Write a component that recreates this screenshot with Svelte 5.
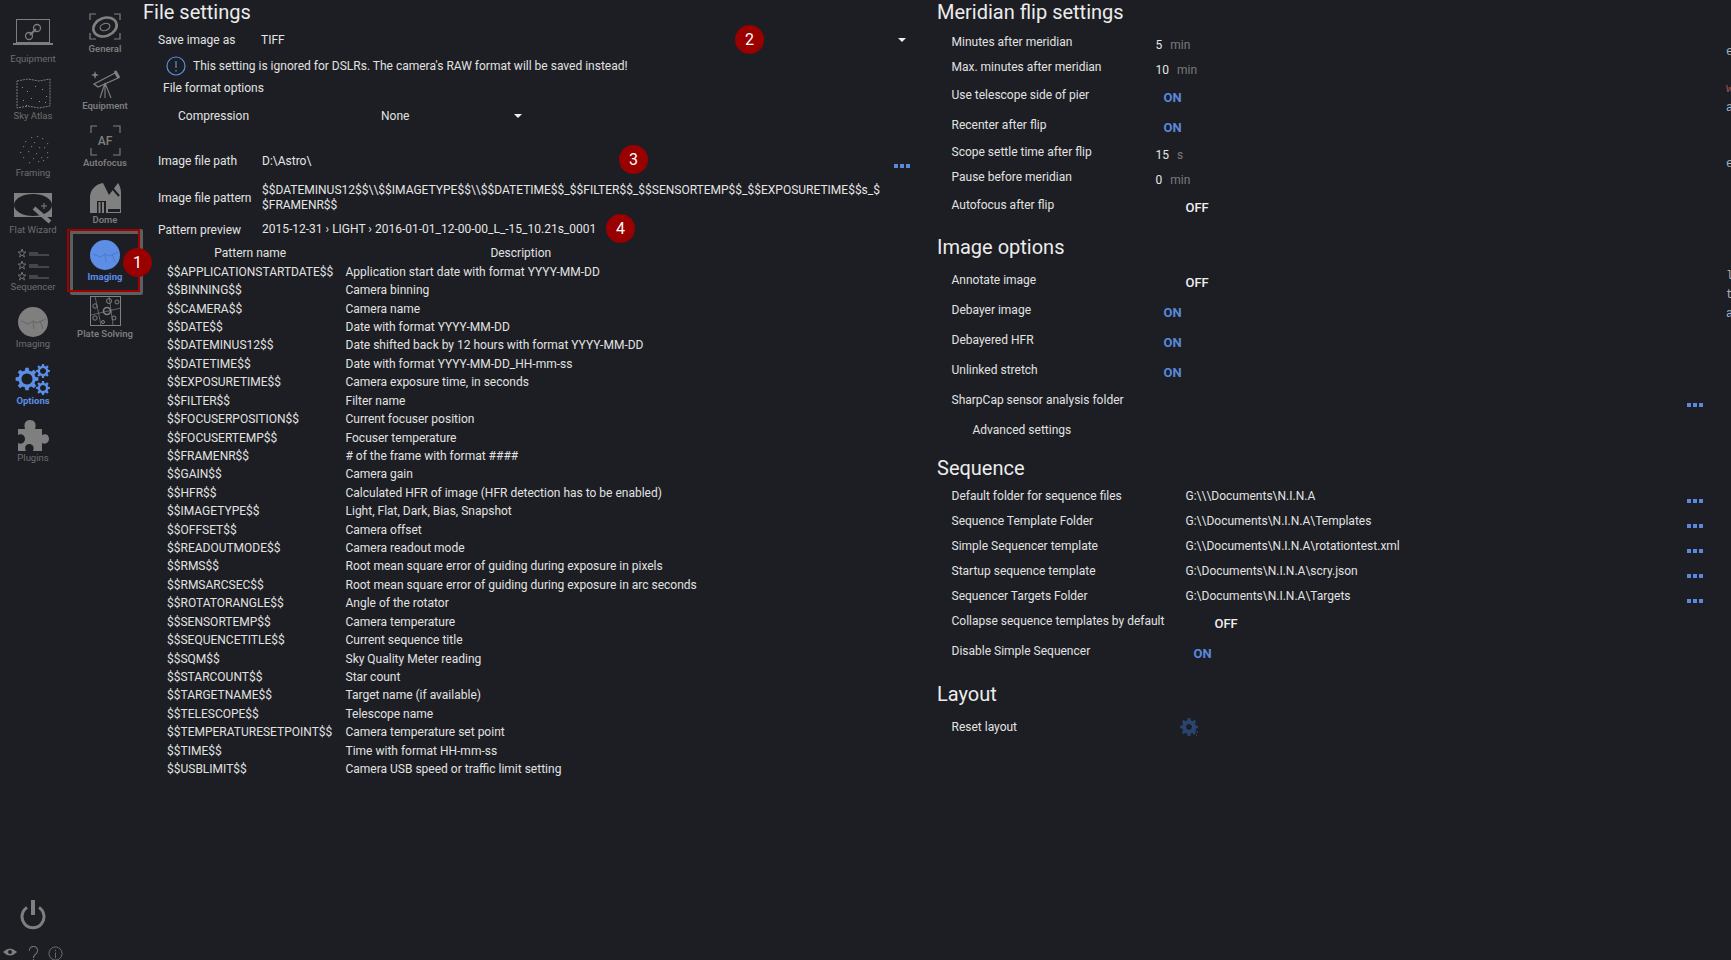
<script>
  const gear = (cx, cy, r, n) => {
    const pts = [];
    const step = (Math.PI * 2) / n;
    for (let i = 0; i < n; i++) {
      const a = i * step;
      const w = step * 0.24;
      pts.push([a - w * 1.25, r * 0.76], [a - w * 0.8, r], [a + w * 0.8, r], [a + w * 1.25, r * 0.76]);
    }
    const d = pts.map(([a, q], i) => `${i ? 'L' : 'M'}${(cx + Math.cos(a) * q).toFixed(2)} ${(cy + Math.sin(a) * q).toFixed(2)}`).join('');
    return `${d}Z`;
  };

  const patterns = [
    ['$$APPLICATIONSTARTDATE$$', 'Application start date with format YYYY-MM-DD'],
    ['$$BINNING$$', 'Camera binning'],
    ['$$CAMERA$$', 'Camera name'],
    ['$$DATE$$', 'Date with format YYYY-MM-DD'],
    ['$$DATEMINUS12$$', 'Date shifted back by 12 hours with format YYYY-MM-DD'],
    ['$$DATETIME$$', 'Date with format YYYY-MM-DD_HH-mm-ss'],
    ['$$EXPOSURETIME$$', 'Camera exposure time, in seconds'],
    ['$$FILTER$$', 'Filter name'],
    ['$$FOCUSERPOSITION$$', 'Current focuser position'],
    ['$$FOCUSERTEMP$$', 'Focuser temperature'],
    ['$$FRAMENR$$', '# of the frame with format ####'],
    ['$$GAIN$$', 'Camera gain'],
    ['$$HFR$$', 'Calculated HFR of image (HFR detection has to be enabled)'],
    ['$$IMAGETYPE$$', 'Light, Flat, Dark, Bias, Snapshot'],
    ['$$OFFSET$$', 'Camera offset'],
    ['$$READOUTMODE$$', 'Camera readout mode'],
    ['$$RMS$$', 'Root mean square error of guiding during exposure in pixels'],
    ['$$RMSARCSEC$$', 'Root mean square error of guiding during exposure in arc seconds'],
    ['$$ROTATORANGLE$$', 'Angle of the rotator'],
    ['$$SENSORTEMP$$', 'Camera temperature'],
    ['$$SEQUENCETITLE$$', 'Current sequence title'],
    ['$$SQM$$', 'Sky Quality Meter reading'],
    ['$$STARCOUNT$$', 'Star count'],
    ['$$TARGETNAME$$', 'Target name (if available)'],
    ['$$TELESCOPE$$', 'Telescope name'],
    ['$$TEMPERATURESETPOINT$$', 'Camera temperature set point'],
    ['$$TIME$$', 'Time with format HH-mm-ss'],
    ['$$USBLIMIT$$', 'Camera USB speed or traffic limit setting']
  ];

  const meridian = [
    { label: 'Minutes after meridian', num: '5', unit: 'min' },
    { label: 'Max. minutes after meridian', num: '10', unit: 'min' },
    { label: 'Use telescope side of pier', on: true },
    { label: 'Recenter after flip', on: true },
    { label: 'Scope settle time after flip', num: '15', unit: 's' },
    { label: 'Pause before meridian', num: '0', unit: 'min' },
    { label: 'Autofocus after flip', on: false }
  ];
  const imageOpts = [
    { label: 'Annotate image', on: false },
    { label: 'Debayer image', on: true },
    { label: 'Debayered HFR', on: true },
    { label: 'Unlinked stretch', on: true }
  ];
  const folders = [
    ['Default folder for sequence files', 'G:\\\\\\Documents\\N.I.N.A'],
    ['Sequence Template Folder', 'G:\\\\Documents\\N.I.N.A\\Templates'],
    ['Simple Sequencer template', 'G:\\\\Documents\\N.I.N.A\\rotationtest.xml'],
    ['Startup sequence template', 'G:\\Documents\\N.I.N.A\\scry.json'],
    ['Sequencer Targets Folder', 'G:\\Documents\\N.I.N.A\\Targets']
  ];
  const frameDots = [[20,8],[26,7],[31,9],[14,12],[23,13],[36,14],[12,17],[20,17],[28,18],[33,18],[9,23],[17,22],[25,24],[36,23],[12,28],[22,29],[30,28],[36,28],[18,33],[27,32],[32,31]];
  const atlasDots = [[11,15],[16,19],[24,14],[31,17],[35,24],[12,28],[20,26],[28,29],[34,30],[15,33]];
  const railLines = ['e', '\u00a0', 'w', 'a', '\u00a0', '\u00a0', 'e', '\u00a0', '\u00a0', '\u00a0', '\u00a0', '\u00a0', 'l', 't', 'a'];
</script>

{#snippet dots()}
  <span class="dots"><i></i><i></i><i></i></span>
{/snippet}

{#snippet setting(r)}
  <div class={r.num ? 'row num' : 'row toggle'}>
    <span class="label">{r.label}</span>
    {#if r.num}
      <span class="numval">{r.num}<em>{r.unit}</em></span>
    {:else if r.on}
      <b class="on">ON</b>
    {:else}
      <b class="off">OFF</b>
    {/if}
  </div>
{/snippet}

<div class="app">
  <nav class="rail-a">
    <div class="nav">
      <svg viewBox="0 0 44 36" fill="none" stroke="#7d7d7d">
        <rect x="5.500" y="4.500" width="33" height="23" />
        <path d="M2 29h40" stroke-width="2" />
        <path d="M19 20l6-6" stroke-width="2" />
        <circle cx="18" cy="21" r="3.500" stroke-width="1.300" /><circle cx="26" cy="13" r="3.500" stroke-width="1.300" />
      </svg>
      <span>Equipment</span>
    </div>
    <div class="nav">
      <svg viewBox="0 0 44 36" fill="none" stroke="#7d7d7d">
        <path d="M6 9l11-2 11 2 11-2v27l-11 2-11-2-11 2z" stroke-dasharray="2 1" />
        {#each atlasDots as [x, y]}<rect {x} {y} width="1" height="1" fill="#8f8f8f" stroke="none" />{/each}
      </svg>
      <span>Sky Atlas</span>
    </div>
    <div class="nav">
      <svg viewBox="0 0 44 36">
        {#each frameDots as [x, y]}<rect {x} {y} width="1.200" height="1.200" fill="#6f6f6f" />{/each}
      </svg>
      <span>Framing</span>
    </div>
    <div class="nav">
      <svg viewBox="0 0 44 36">
        <rect x="3" y="7" width="38" height="24" fill="#808080" />
        <ellipse cx="22" cy="19" rx="19" ry="11" fill="#1c1e23" />
        <path d="M23 22l16 14" stroke="#808080" stroke-width="4" />
        <path d="M30 20h6M33 17v6" stroke="#808080" />
      </svg>
      <span>Flat Wizard</span>
    </div>
    <div class="nav">
      <svg viewBox="0 0 44 36" fill="none" stroke="#6f6f6f">
        <path d="M11 6l1 3h3l-2.500 2 1 3-2.500-2-2.500 2 1-3L7 9h3z" />
        <path d="M11 18l1 3h3l-2.500 2 1 3-2.500-2-2.500 2 1-3L7 21h3z" />
        <path d="M11 29l1 3h3l-2.500 2 1 3-2.500-2-2.500 2 1-3L7 32h3z" />
        <path d="M18 10h9M18 12h20M18 22h9M18 24h20M18 33h9M18 35h20" />
      </svg>
      <span>Sequencer</span>
    </div>
    <div class="nav">
      <svg viewBox="0 0 44 36">
        <circle cx="22" cy="22" r="15" fill="#7f7f7f" />
        <path d="M10 21l7 3 5-3 4 2 9-4M22 21l1 8M29 21l3 8" fill="none" stroke="#5f5f5f" stroke-width=".8" />
      </svg>
      <span>Imaging</span>
    </div>
    <div class="nav active">
      <svg viewBox="0 0 44 36" fill="#5c8ee6">
        <path fill-rule="evenodd" d="{gear(16, 22, 11.500, 8)}M16 16.500a5.500 5.500 0 1 0 .01 0z" />
        <path fill-rule="evenodd" d="{gear(32, 14, 7, 8)}M32 11a3 3 0 1 0 .01 0z" />
        <path fill-rule="evenodd" d="{gear(32, 31, 7, 8)}M32 28a3 3 0 1 0 .01 0z" />
      </svg>
      <span>Options</span>
    </div>
    <div class="nav">
      <svg viewBox="0 0 44 36" fill="#7f7f7f">
        <path d="M7 15H14C12 8 16 6 19 6C23 6 26 9 24 15H31V21C36 19 38 22 38 25C38 28 35 31 31 29V37H22C24 32 21 30 18 30C15 30 13 33 15 37H7V29C11 31 14 28 14 25C14 22 11 19 7 21Z" />
      </svg>
      <span>Plugins</span>
    </div>
    <div class="bottom">
      <svg class="power" viewBox="0 0 26 30" fill="none" stroke="#7f7f7f" stroke-width="3">
        <path d="M13 0v15" stroke-width="4" />
        <path d="M7 7.500a11 11 0 1 0 12 0" />
      </svg>
      <div class="mini">
        <svg viewBox="0 0 18 12" class="eye"><path d="M1 6q8-8 16 0q-8 8-16 0z" fill="#7f7f7f" /><circle cx="9" cy="6" r="2.200" fill="#1c1e23" /></svg>
        <svg viewBox="0 0 12 16" class="q" fill="none" stroke="#6f6f6f" stroke-width="1.200"><path d="M1.500 5a4.500 4.500 0 1 1 7 3.500C6.500 10 6 11 6 13" /><path d="M6 14v2" /></svg>
        <svg viewBox="0 0 16 16" class="inf" fill="none" stroke="#6f6f6f"><circle cx="8" cy="8" r="7" /><path d="M8 7v6M8 4v1.500" /></svg>
      </div>
    </div>
  </nav>

  <nav class="rail-b">
    <div class="nav">
      <svg viewBox="0 0 44 36" fill="none" stroke="#808080">
        <path d="M7 15V9h6M31 9h6v6M37 28v6h-6M13 34H7v-6" stroke-width="1.200" />
        <ellipse cx="22" cy="22" rx="12" ry="9" transform="rotate(-20 22 22)" stroke-width="2.600" />
        <ellipse cx="22" cy="22" rx="5" ry="3.400" transform="rotate(-20 22 22)" stroke-width="1.200" />
      </svg>
      <span>General</span>
    </div>
    <div class="nav">
      <svg viewBox="0 0 44 36" fill="none" stroke="#808080">
        <path d="M11 22l21-11 3 5-20 9z" stroke-width="1.300" />
        <path d="M32 9l4 7" stroke-width="3" />
        <path d="M22 21l-5 15M22 21v15M22 21l6 15" stroke-width="1.100" />
        <path d="M12 9l1 3 3 1-3 1-1 3-1-3-3-1 3-1z" fill="#808080" stroke="none" />
      </svg>
      <span>Equipment</span>
    </div>
    <div class="nav">
      <svg viewBox="0 0 44 36" fill="none" stroke="#808080" stroke-width="1.100">
        <path d="M8 14V7h6M30 7h7v7M37 29v7h-7M14 36H8v-7" />
      </svg>
      <strong class="af">AF</strong>
      <span>Autofocus</span>
    </div>
    <div class="nav">
      <svg viewBox="0 0 44 36">
        <path d="M7 37V20C8 12 14 8 20 7l6 12 9-12c2 3 3 6 3 10v20z" fill="#808080" />
        <path d="M24 6l12 14" stroke="#1c1e23" stroke-width="2" />
        <rect x="14" y="25" width="9" height="12" fill="#1c1e23" />
        <path d="M16.500 26v11M20 26v11" stroke="#808080" stroke-width="2" />
        <path d="M25 33h12v3H25z" fill="#1c1e23" />
      </svg>
      <span>Dome</span>
    </div>
    <div class="nav selected">
      <svg viewBox="0 0 44 36">
        <circle cx="22" cy="22" r="15" fill="#5c8ee6" />
        <path d="M10 21l7 3 5-3 4 2 9-4M22 21l1 8M29 21l3 8" fill="none" stroke="#4a76c2" stroke-width=".8" />
      </svg>
      <span>Imaging</span>
      <em class="badge badge-1">1</em>
    </div>
    <div class="nav plate">
      <svg viewBox="0 0 44 36" fill="none" stroke="#808080">
        <rect x="7.500" y="6.500" width="30" height="29" />
        <path d="M12 6l6 29M8 25l30-7M26 6l4 29" stroke-width=".7" />
        <circle cx="12" cy="16" r="2.200" /><circle cx="26" cy="11" r="2.500" /><circle cx="34" cy="12" r="2" /><circle cx="24" cy="21" r="3.500" stroke-width="1.600" /><circle cx="12" cy="28" r="2.200" /><circle cx="31" cy="28" r="2" /><circle cx="20" cy="32" r="1.500" />
      </svg>
      <span>Plate Solving</span>
    </div>
  </nav>

  <main class="col-left">
    <h2>File settings</h2>
    <div class="line save">
      <span class="key">Save image as</span>
      <span class="val tiff">TIFF</span>
      <span class="caret"></span>
      <em class="badge badge-2">2</em>
    </div>
    <div class="info">
      <svg viewBox="0 0 20 20" fill="none" stroke="#5c8ee6" stroke-width="1.200"><circle cx="10" cy="10" r="9" /><path d="M10 5v7M10 14v1.500" /></svg>
      <span>This setting is ignored for DSLRs. The camera's RAW format will be saved instead!</span>
    </div>
    <div class="format">File format options</div>
    <div class="compression">
      <span class="ckey">Compression</span>
      <span class="cval">None</span>
      <span class="caret"></span>
    </div>
    <div class="line path">
      <span class="key">Image file path</span>
      <span class="val">D:\Astro\</span>
      {@render dots()}
      <em class="badge badge-3">3</em>
    </div>
    <div class="line pattern">
      <span class="key">Image file pattern</span>
      <span class="val wrap">$$DATEMINUS12$$\\$$IMAGETYPE$$\\$$DATETIME$$_$$FILTER$$_$$SENSORTEMP$$_$$EXPOSURETIME$$s_$<br />$FRAMENR$$</span>
    </div>
    <div class="line preview">
      <span class="key">Pattern preview</span>
      <span class="val">2015-12-31 › LIGHT › 2016-01-01_12-00-00_L_-15_10.21s_0001</span>
      <em class="badge badge-4">4</em>
    </div>
    <table>
      <thead><tr><th>Pattern name</th><th>Description</th></tr></thead>
      <tbody>
        {#each patterns as [name, desc]}
          <tr><td>{name}</td><td>{desc}</td></tr>
        {/each}
      </tbody>
    </table>
  </main>

  <section class="col-right">
    <div class="group g1">
      <h2>Meridian flip settings</h2>
      {#each meridian as r}{@render setting(r)}{/each}
    </div>
    <div class="group g2">
      <h2>Image options</h2>
      {#each imageOpts as r}{@render setting(r)}{/each}
      <div class="row toggle"><span class="label">SharpCap sensor analysis folder</span>{@render dots()}</div>
      <div class="row toggle"><span class="label adv">Advanced settings</span></div>
    </div>
    <div class="group g3">
      <h2>Sequence</h2>
      {#each folders as [label, value]}
        <div class="row num">
          <span class="label">{label}</span>
          <span class="folder">{value}</span>
          {@render dots()}
        </div>
      {/each}
      <div class="row collapse">
        <span class="label">Collapse sequence templates by default</span>
        <b class="off shift-off">OFF</b>
      </div>
      <div class="row toggle">
        <span class="label">Disable Simple Sequencer</span>
        <b class="on shift-on">ON</b>
      </div>
    </div>
    <div class="group g4">
      <h2>Layout</h2>
      <div class="row toggle">
        <span class="label">Reset layout</span>
        <svg class="reset" viewBox="0 0 20 20">
          <path fill="#2a4470" fill-rule="evenodd" d="{gear(9, 10, 9, 8)}M9 7a3 3 0 1 0 .01 0z" />
          <path d="M15 13h1M17 15h1M13 17h1M16 18h1" stroke="#3c5f99" />
        </svg>
      </div>
    </div>
  </section>

  <div class="edge">
    {#each railLines as l}
      <div class:red={l === 'w'}>{l}</div>
    {/each}
  </div>
</div>

<style>
  :global(body) {
    margin: 0;
    background: #1c1e23;
  }
  .app {
    display: flex;
    width: 1731px;
    height: 960px;
    overflow: hidden;
    background: #1c1e23;
    color: #e2e2e2;
    font: 12px/20px Roboto, sans-serif;
  }
  .rail-a {
    position: relative;
    flex: 0 0 66px;
    padding-top: 15px;
    box-sizing: border-box;
  }
  .rail-b {
    flex: 0 0 72px;
    margin-left: 3px;
    padding-top: 5px;
    box-sizing: border-box;
  }
  .nav {
    position: relative;
    display: flex;
    flex-direction: column;
    align-items: center;
    height: 57px;
    color: #6e6e6e;
    font-size: 9.5px;
    line-height: 14px;
  }
  .nav svg {
    display: block;
    width: 44px;
    height: 36px;
    flex: none;
    overflow: visible;
  }
  .nav span {
    position: relative;
    white-space: nowrap;
    margin-top: 1px;
  }
  .rail-b .nav {
    color: #7c7c7c;
    font-weight: 600;
  }
  .rail-b .nav span {
    margin-top: 0.500px;
  }
  .nav.active {
    color: #5c8ee6;
    font-weight: 700;
  }
  .rail-b .nav.selected {
    color: #5c8ee6;
    font-weight: 700;
    z-index: 1;
  }
  .nav.selected::before {
    content: '';
    position: absolute;
    left: 1px;
    top: -4px;
    width: 73px;
    height: 66px;
    box-sizing: border-box;
    border: 3px solid #5e5e5e;
    border-top-width: 5px;
    border-radius: 2px;
  }
  .nav.selected::after {
    content: '';
    position: absolute;
    left: -2px;
    top: -4px;
    width: 73px;
    height: 63px;
    box-sizing: border-box;
    border: 2px solid #a00000;
  }
  .af {
    position: absolute;
    top: 14px;
    left: 0;
    right: 0;
    text-align: center;
    color: #808080;
    font-size: 12px;
    line-height: 16px;
    font-weight: 500;
  }
  .bottom {
    position: absolute;
    left: 0;
    right: 0;
    bottom: 0;
  }
  .power {
    display: block;
    width: 26px;
    height: 30px;
    margin: 0 0 12px 20px;
  }
  .mini {
    position: relative;
    height: 18px;
    overflow: hidden;
  }
  .mini svg {
    position: absolute;
    top: 4px;
  }
  .eye { left: 2px; width: 16px; height: 12px; }
  .q { left: 28px; width: 11px; height: 15px; }
  .inf { left: 48px; width: 15px; height: 15px; }

  .col-left {
    position: relative;
    flex: 0 0 793px;
    margin-left: 2px;
    box-sizing: border-box;
  }
  h2 {
    margin: 0;
    font-size: 20px;
    line-height: 24px;
    font-weight: 400;
    color: #ececec;
  }
  .line {
    position: relative;
    display: flex;
    padding-left: 15px;
  }
  .key {
    flex: 0 0 104px;
  }
  .val {
    color: #e6e6e6;
  }
  .save {
    height: 26px;
    margin-top: 3px;
    align-items: center;
  }
  .tiff {
    margin-left: -1px;
  }
  .caret {
    position: absolute;
    left: 755px;
    top: 11px;
    border: 4px solid transparent;
    border-top-color: #eee;
    border-bottom-width: 0;
  }
  .info {
    display: flex;
    align-items: center;
    gap: 7px;
    height: 25px;
    padding-left: 23px;
  }
  .info svg {
    width: 20px;
    height: 20px;
  }
  .format {
    height: 21px;
    padding-left: 20px;
    line-height: 21px;
  }
  .compression {
    position: relative;
    display: flex;
    align-items: center;
    height: 32px;
    box-sizing: border-box;
    padding: 2px 0 0 35px;
  }
  .ckey {
    flex: 0 0 203px;
  }
  .compression .caret {
    left: 371px;
    top: 15px;
  }
  .path {
    height: 28px;
    margin-top: 16px;
    align-items: center;
  }
  .path .dots {
    position: absolute;
    left: 751px;
    top: 17px;
  }
  .pattern {
    height: 44px;
    margin-top: 1px;
    align-items: center;
  }
  .wrap {
    line-height: 15px;
  }
  .preview {
    height: 24px;
    align-items: flex-start;
  }
  .preview .val {
    margin-top: -1px;
  }
  .dots {
    display: inline-flex;
    gap: 2px;
  }
  .dots i {
    width: 4px;
    height: 4px;
    background: #5a88dc;
  }
  table {
    width: 541px;
    margin-left: 12px;
    border-collapse: collapse;
    table-layout: fixed;
  }
  th {
    height: 18.500px;
    padding: 0;
    font-weight: 400;
    line-height: 18px;
    text-align: center;
  }
  th:first-child {
    width: 190.500px;
  }
  td {
    height: 18.430px;
    padding: 0;
    line-height: 18px;
    white-space: nowrap;
  }
  td:first-child {
    padding-left: 12px;
  }

  .col-right {
    flex: 0 0 790px;
    box-sizing: border-box;
    padding: 0 23px 0 1px;
  }
  .group.g2 { margin-top: 13.500px; }
  .group.g3 { margin-top: 9.500px; }
  .group.g4 { margin-top: 14px; }
  .g1 h2 { margin-bottom: 7.500px; }
  .g2 h2 { margin-bottom: 7.500px; }
  .g3 h2 { margin-bottom: 6px; }
  .g4 h2 { margin-bottom: 7.500px; }
  .row {
    display: flex;
    align-items: flex-start;
    padding-left: 14.500px;
  }
  .row.num { height: 25px; }
  .row.toggle { height: 30px; padding-top: 3.500px; box-sizing: border-box; }
  .row.collapse { height: 26.500px; }
  .label {
    flex: 0 0 204px;
    white-space: nowrap;
  }
  .adv {
    padding-left: 21px;
  }
  .numval {
    padding-top: 3.500px;
    color: #e6e6e6;
  }
  .numval em {
    margin-left: 8px;
    font-style: normal;
    color: #7a7a7a;
  }
  b {
    font-size: 13px;
    padding-top: 3px;
  }
  .on {
    margin-left: 8px;
    color: #5a88dc;
  }
  .off {
    margin-left: 30px;
    font-weight: 500;
    color: #eee;
  }
  .row.collapse .label {
    flex-basis: 263px;
  }
  .shift-off {
    margin-left: 0;
    padding-top: 3px;
  }
  .shift-on {
    margin-left: 38px;
  }
  .folder {
    flex: 0 0 0;
    margin-left: 30px;
    white-space: nowrap;
  }
  .row .dots {
    margin-left: auto;
    margin-top: 13px;
  }
  .row .reset {
    width: 20px;
    height: 20px;
    margin-left: 24px;
  }
  .edge {
    flex: none;
    padding-top: 43px;
    font: 12px/18.700px "Liberation Mono", monospace;
    color: #a8b0b8;
  }
  .edge .red {
    color: #a85050;
  }
  .badge {
    position: absolute;
    width: 29px;
    height: 29px;
    border-radius: 50%;
    background: #990000;
    color: #fff;
    font-size: 16px;
    font-style: normal;
    font-weight: 400;
    line-height: 29px;
    text-align: center;
    z-index: 2;
  }
  .rail-b .badge-1 { left: 54px; top: 15px; }
  .badge-2 { left: 592px; top: -2px; }
  .badge-3 { left: 476px; top: -2px; }
  .badge-4 { left: 463px; top: -6px; }
</style>
